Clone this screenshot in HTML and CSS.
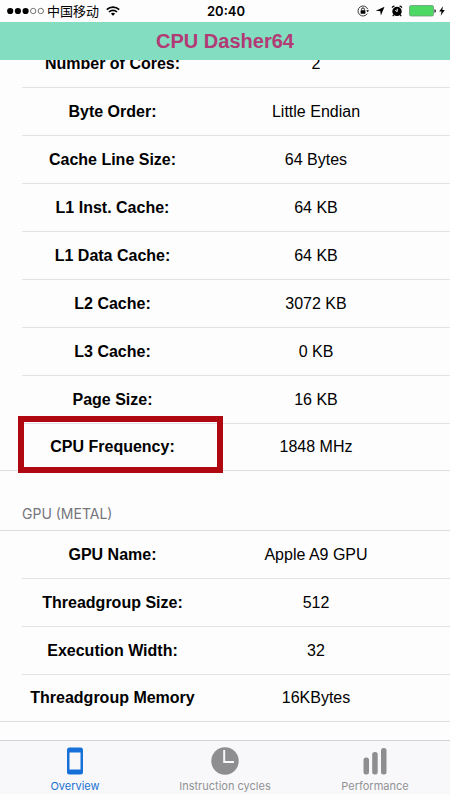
FILE: index.html
```html
<!DOCTYPE html>
<html lang="en">
<head>
<meta charset="utf-8">
<meta name="viewport" content="width=device-width, initial-scale=1">
<title>CPU Dasher64</title>
<link rel="stylesheet" href="styles.css">
</head>
<body>
<div class="status">
  <div class="status-left">
    <svg class="signal" width="37" height="8" viewBox="0 0 37 8" aria-hidden="true">
      <circle cx="3.2" cy="4" r="3.1"/><circle cx="10.9" cy="4" r="3.1"/><circle cx="18.6" cy="4" r="3.1"/>
      <g fill="none" stroke="#555" stroke-width=".8"><circle cx="26.2" cy="4" r="2.7"/><circle cx="33.8" cy="4" r="2.7"/></g>
    </svg>
    <span class="carrier" lang="zh">中国移动</span>
    <svg class="wifi" width="14" height="10" viewBox="0 0 14 10" aria-hidden="true">
      <g fill="none" stroke="#000" stroke-width="1.7"><path d="M.8 3.7a8.8 8.8 0 0 1 12.4 0"/><path d="M3 6a5.7 5.7 0 0 1 8 0"/></g>
      <path d="M7 9.800 4.900 7.700a3 3 0 0 1 4.200 0z"/>
    </svg>
  </div>
  <time class="clock">20:40</time>
  <div class="status-right">
    <svg width="12" height="12" viewBox="0 0 12 12" aria-hidden="true">
      <path d="M10.700 4.200A5 5 0 1 0 10.300 8.600" fill="none" stroke="#222" stroke-width=".9"/>
      <path d="M9.200 5.300h2.800l-1.400 2z"/>
      <rect x="3.600" y="5.200" width="4.800" height="3.500" rx=".4"/>
      <path d="M4.600 5.400V4.300a1.400 1.400 0 0 1 2.800 0v1.100" fill="none" stroke="#000" stroke-width=".9"/>
    </svg>
    <svg width="10" height="10" viewBox="0 0 10 10" aria-hidden="true"><path d="M9.500.8 5.900 9.400 5.300 5.200.8 4.700z"/></svg>
    <svg width="12" height="12" viewBox="0 0 12 12" aria-hidden="true">
      <circle cx="6" cy="6.400" r="4.700"/>
      <path d="M.8 3.300A2.200 2.200 0 0 1 4 .9zM11.200 3.300A2.200 2.200 0 0 0 8 .9z"/>
      <path d="m3 9.500-1.200 1.700M9 9.500l1.200 1.700" stroke="#000" stroke-width="1.300"/>
      <path d="M6.200 3.800v2.800L4.300 5.500" fill="none" stroke="#fff" stroke-width="1"/>
    </svg>
    <svg width="27" height="12" viewBox="0 0 27 12" aria-hidden="true">
      <rect x=".5" y=".5" width="24" height="10.500" rx="1.500" fill="#4cd964" stroke="#6f9b78" stroke-width=".8"/>
      <path d="M25.500 4v3.800q1.300-.5 1.300-1.900T25.500 4z"/>
    </svg>
    <svg class="bolt" width="6" height="10" viewBox="0 0 6 10" aria-hidden="true"><path d="M4 .2.200 5.500h2.300L1.700 9.800 5.800 4H3.300z"/></svg>
  </div>
</div>
<header class="title-bar"><h1>CPU Dasher64</h1></header>
<main class="content">
  <section class="group group-cpu">
    <table>
      <colgroup><col class="col-label"><col></colgroup>
      <tbody>
        <tr><th scope="row">Number of Cores:</th><td>2</td></tr>
        <tr><th scope="row">Byte Order:</th><td>Little Endian</td></tr>
        <tr><th scope="row">Cache Line Size:</th><td>64 Bytes</td></tr>
        <tr><th scope="row">L1 Inst. Cache:</th><td>64 KB</td></tr>
        <tr><th scope="row">L1 Data Cache:</th><td>64 KB</td></tr>
        <tr><th scope="row">L2 Cache:</th><td>3072 KB</td></tr>
        <tr><th scope="row">L3 Cache:</th><td>0 KB</td></tr>
        <tr><th scope="row">Page Size:</th><td>16 KB</td></tr>
        <tr><th scope="row" class="marked">CPU Frequency:</th><td>1848 MHz</td></tr>
      </tbody>
    </table>
  </section>
  <h2 class="group-title">GPU (METAL)</h2>
  <section class="group group-gpu">
    <table>
      <colgroup><col class="col-label"><col></colgroup>
      <tbody>
        <tr><th scope="row">GPU Name:</th><td>Apple A9 GPU</td></tr>
        <tr><th scope="row">Threadgroup Size:</th><td>512</td></tr>
        <tr><th scope="row">Execution Width:</th><td>32</td></tr>
        <tr><th scope="row">Threadgroup Memory</th><td>16KBytes</td></tr>
      </tbody>
    </table>
  </section>
</main>
<nav class="tabs">
  <a class="tab active" href="#overview" aria-current="page">
    <svg width="28" height="28" viewBox="0 0 28 28" aria-hidden="true"><path fill-rule="evenodd" d="M8.500.500h11a2.500 2.500 0 0 1 2.500 2.500v22a2.500 2.500 0 0 1-2.500 2.500h-11A2.500 2.500 0 0 1 6 25V3A2.500 2.500 0 0 1 8.500.500zM8.500 5.500v17h11v-17z"/></svg>
    <span>Overview</span>
  </a>
  <a class="tab" href="#cycles">
    <svg width="28" height="28" viewBox="0 0 28 28" aria-hidden="true"><circle cx="14" cy="14" r="13.700"/><path d="M13.200 3v12H23" fill="none" stroke="#f8f8fb" stroke-width="2"/></svg>
    <span>Instruction cycles</span>
  </a>
  <a class="tab" href="#performance">
    <svg width="28" height="28" viewBox="0 0 28 28" aria-hidden="true"><rect x="2.500" y="10.500" width="5.500" height="17" rx="2.500"/><rect x="11.200" y="5" width="5.500" height="22.500" rx="2.500"/><rect x="20" y="1" width="5.500" height="26.500" rx="2.500"/></svg>
    <span>Performance</span>
  </a>
</nav>
</body>
</html>
```
FILE: styles.css
```css
* {
  box-sizing: border-box;
}

body {
  display: flex;
  flex-direction: column;
  height: 100vh;
  margin: 0;
  padding-bottom: 6px;
  background: #fdfdfe;
  color: #000;
  font-family: "Liberation Sans", Arial, sans-serif;
}

svg {
  display: block;
  flex: none;
}

.status {
  display: grid;
  grid-template-columns: 1fr auto 1fr;
  align-items: center;
  height: 22px;
  padding: 0 5px 0 7px;
}

.status-left,
.status-right {
  display: flex;
  align-items: center;
}

.status-left {
  gap: 3px;
}

.status-right {
  justify-content: flex-end;
  gap: 6px;
}

.carrier {
  font: 13px/20px "Noto Sans CJK SC", sans-serif;
}

.wifi {
  margin-left: 4px;
}

.bolt {
  margin-left: -3px;
}

.clock {
  font: 600 13px/20px Inter, sans-serif;
}

.title-bar {
  height: 38px;
  background: #83ddc0;
}

.title-bar h1 {
  margin: 0;
  color: #b23a75;
  font-size: 20px;
  line-height: 38px;
  text-align: center;
}

.content {
  flex: 1;
  min-height: 0;
  overflow: hidden;
}

.group {
  padding-left: 22px;
  border-bottom: 1px solid #dedee2;
}

/* The list is scrolled so its first row sits partly under the title bar. */
.group-cpu {
  margin-top: -20px;
}

.group-gpu {
  border-top: 1px solid #dedee2;
}

table {
  width: 100%;
  border-spacing: 0;
  table-layout: fixed;
}

.col-label {
  width: 181px;
}

th,
td {
  height: 48px;
  padding: 0;
  border-bottom: 1px solid #e2e2e6;
  font-size: 16px;
  text-align: center;
}

tr:last-child > * {
  height: 46px;
  border-bottom: 0;
}

td {
  padding-right: 21px;
}

.marked {
  position: relative;
}

.marked::after {
  position: absolute;
  inset: -8px -20px -3px -4px;
  border: 6px solid #b00810;
  content: "";
}

.group-title {
  height: 59px;
  margin: 0;
  padding: 33px 22px 0;
  color: #75757a;
  font: 14px/20px Inter, sans-serif;
}

.tabs {
  display: grid;
  grid-template-columns: repeat(3, 1fr);
  height: 54px;
  border-top: 1px solid #d2d2d6;
  background: #f8f8fb;
}

.tab {
  display: flex;
  flex-direction: column;
  align-items: center;
  gap: 4px;
  padding-top: 6px;
  color: #929295;
  fill: #8e8e90;
  font: 11px/14px Inter, sans-serif;
  text-decoration: none;
}

.active {
  color: #1872d0;
  fill: #1670d8;
}
```
